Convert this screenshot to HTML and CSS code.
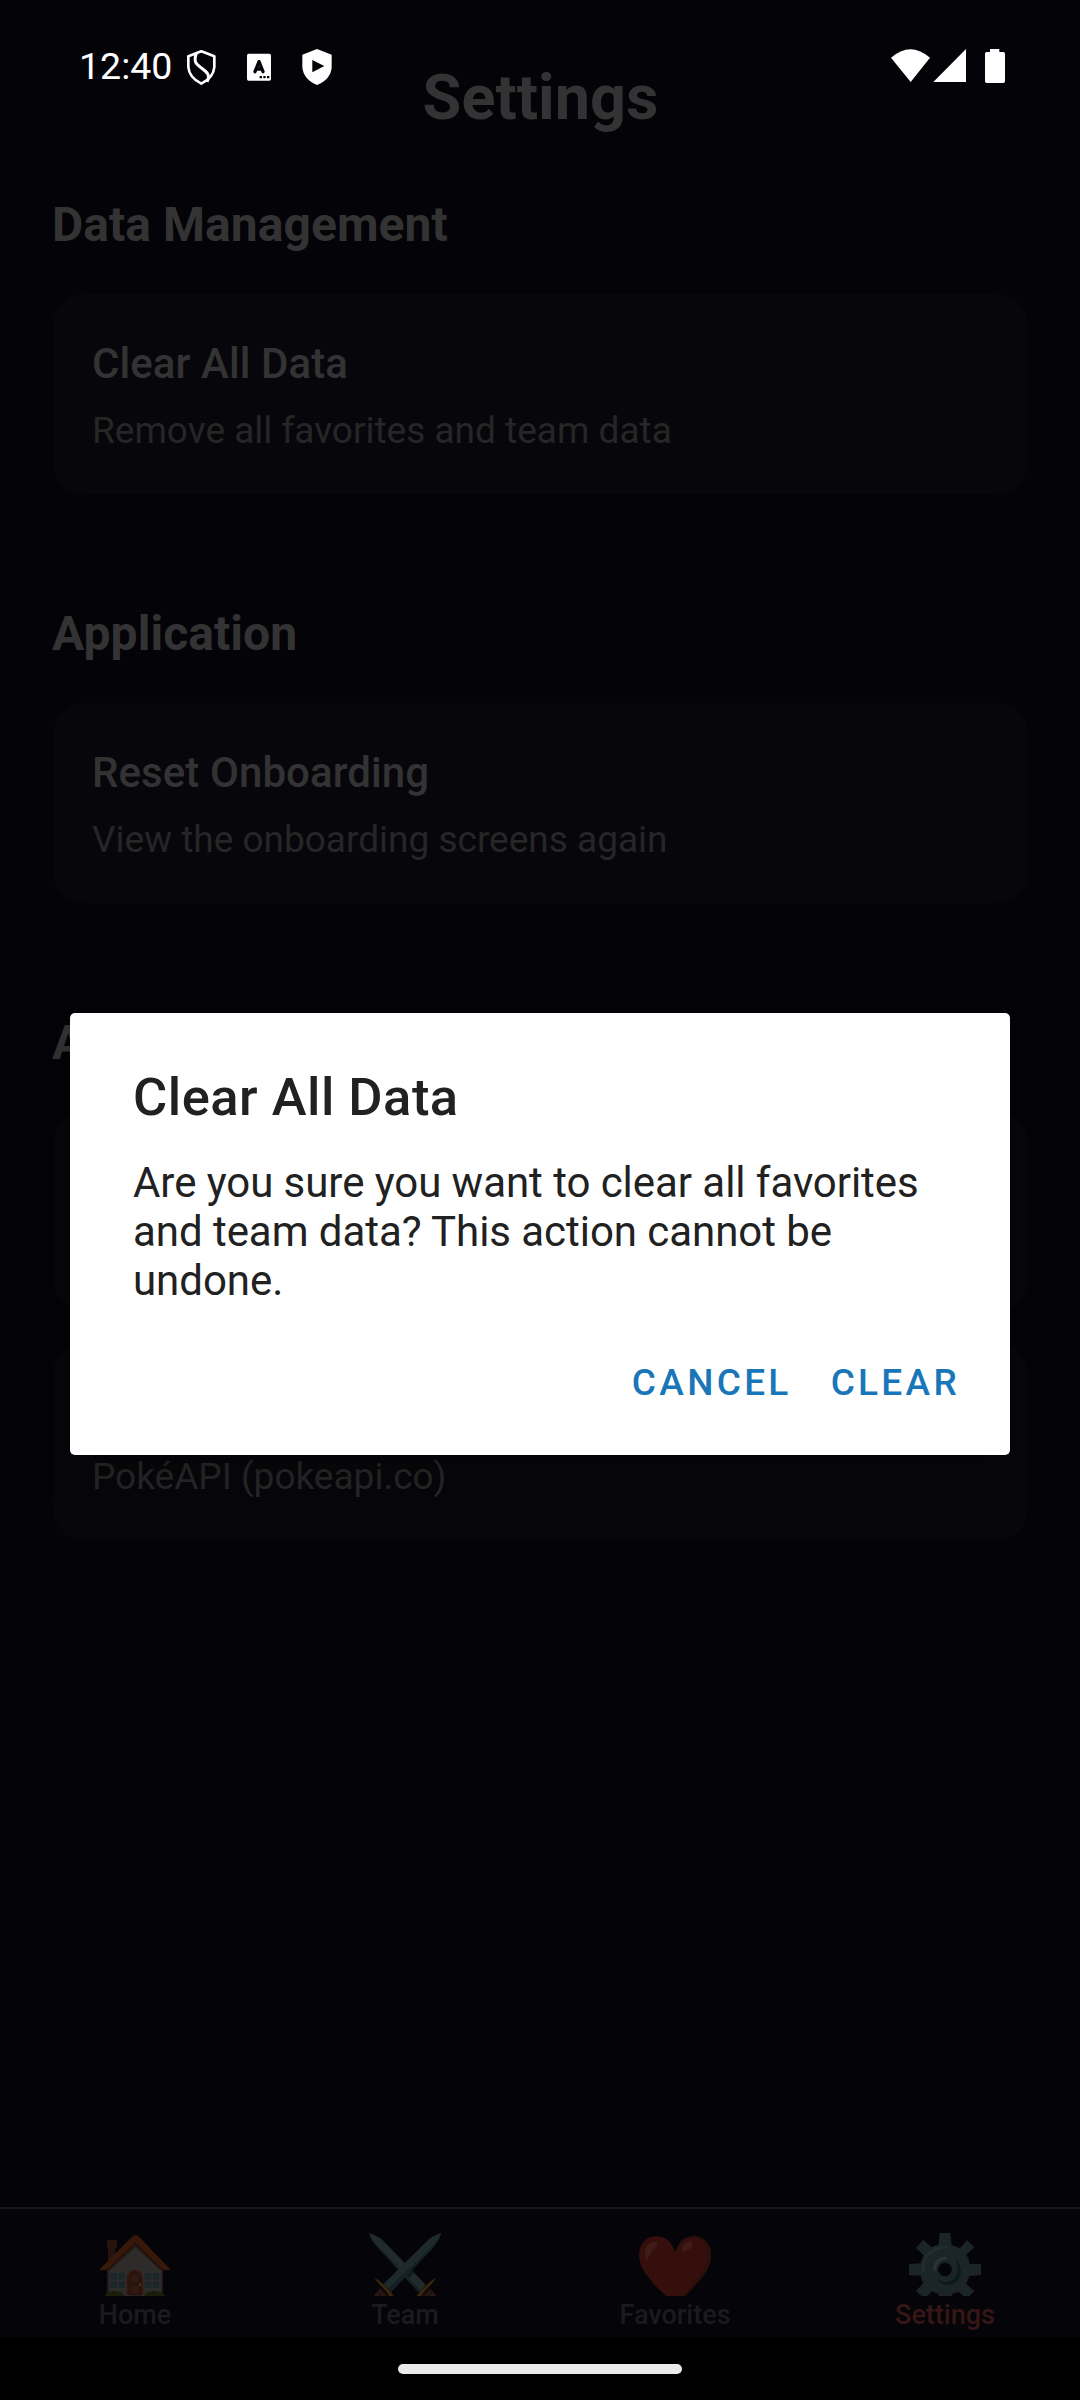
FILE: index.html
```html
<!DOCTYPE html>
<html lang="en">
<head>
<meta charset="utf-8">
<title>Settings</title>
<link rel="stylesheet" href="styles.css">
</head>
<body>
<div class="screen">
  <main class="page">
    <h1 class="page-title">Settings</h1>
    <section class="section">
      <h2 class="section-title">Data Management</h2>
      <div class="card">
        <div class="card-title">Clear All Data</div>
        <div class="card-sub">Remove all favorites and team data</div>
      </div>
    </section>
    <section class="section">
      <h2 class="section-title">Application</h2>
      <div class="card">
        <div class="card-title">Reset Onboarding</div>
        <div class="card-sub">View the onboarding screens again</div>
      </div>
    </section>
    <section class="section">
      <h2 class="section-title">About</h2>
      <div class="card card-stacked"></div>
      <div class="card card-end">
        <div class="card-sub">PokéAPI (pokeapi.co)</div>
      </div>
    </section>
  </main>

  <nav class="tabs">
    <div class="tab">
      <svg class="tab-icon" viewBox="117 129 216 189">
        <path fill="#27130d" d="M141 151h30v23h-5v30l-22 20v-50h-3z"/>
        <path fill="#2d2c2b" d="M142 230l84-75 82 75v88H142z"/>
        <path fill="#211e1d" d="M141 252v-16l85-78 83 78v16l-6-10-77-70-77 70z"/>
        <path fill="#381809" d="M117 240l98-98q11-14 23 0l95 98h-21l-86-83-88 83z"/>
        <path fill="#28120b" d="M138 240l88-85 86 85h-9l-77-73-79 73z"/>
        <path fill="#211412" d="M142 246h4v60h-4zM305 246h4v60h-4z"/>
        <g fill="#1b2629"><rect x="150" y="249" width="21" height="20" rx="3"/><rect x="175" y="249" width="20" height="20" rx="3"/><rect x="150" y="274" width="21" height="20" rx="3"/><rect x="175" y="274" width="20" height="20" rx="3"/><rect x="253" y="249" width="21" height="20" rx="3"/><rect x="278" y="249" width="20" height="20" rx="3"/><rect x="253" y="274" width="21" height="20" rx="3"/><rect x="278" y="274" width="20" height="20" rx="3"/></g>
        <path fill="#35150f" d="M200 316v-52q2-24 24-25 23 1 25 25v52z"/>
        <path fill="#27130d" d="M206 316v-50q2-20 18-21 17 1 19 21v50z"/>
        <path fill="#32190f" d="M212 278v-14q2-12 12-13 11 1 13 13v14zM212 288h25v24h-25z"/>
        <circle cx="240" cy="284" r="4" fill="#49370a"/>
        <path fill="#191e0c" d="M135 318q4-15 17-13 9-5 18 0 17-3 23 13zM253 318q6-15 20-13 9-5 20 0 15-2 22 13z"/>
      </svg>
      <span class="tab-label">Home</span>
    </div>
    <div class="tab">
      <svg class="tab-icon" viewBox="117 129 216 189">
        <path fill="#202b2e" d="M117 129q26 7 44 25l126 130-15 19-128-130q-21-21-27-44z"/>
        <path fill="#162023" d="M117 129q4 17 20 32l136 142-8 4-121-134q-21-21-27-44z"/>
        <path fill="#11191b" d="M229 253l16-15 7 8-14 18z"/>
        <path fill="#1d292b" d="M334 129q-26 7-44 25L160 283l22 21 124-127q21-24 28-48z"/>
        <path fill="#142023" d="M334 129q-9 23-26 39L174 296l10 10 122-129q21-24 28-48z"/>
        <path fill="#291713" d="M132 318q12-18 20-23l21 23zM319 318q-12-18-20-23l-22 23z"/>
        <path fill="none" stroke="#1d100e" stroke-width="4" d="M142 303l12 15M150 296l16 20M309 303l-14 15M302 296l-19 20"/>
        <path fill="#3a280b" d="M134 264q11 4 29 22 22 22 29 33h-14q-7-13-22-28-18-18-22-27zM318 264q-11 4-29 22-22 22-31 33h15q7-11 22-27 17-18 23-28z"/>
      </svg>
      <span class="tab-label">Team</span>
    </div>
    <div class="tab">
      <svg class="tab-icon" viewBox="117 129 216 189">
        <path fill="#2c0e0b" d="M226 191c6-34 28-53 56-53 30 0 52 24 52 57 0 44-35 79-79 123h-56c-46-43-82-80-82-123 0-33 21-57 53-57 29 0 49 20 56 53z"/>
        <path fill="#350f0b" d="M224 190c10-29 28-45 52-48 27 0 46 20 46 50 0 45-38 86-75 126h-48c-46-43-81-80-81-123 0-32 21-55 52-55 27 0 46 18 54 50z"/>
        <path fill="#401c19" d="M142 214c-15-23-7-57 20-59 12 1 13 13 4 20-14 9-19 22-24 39zM246 182c-2-14 13-29 26-27 9 4 7 16-3 22-10 8-21 10-23 5z"/>
      </svg>
      <span class="tab-label">Favorites</span>
    </div>
    <div class="tab tab-active">
      <svg class="tab-icon" viewBox="147 129 216 189">
        <path fill="#1b2527" fill-rule="evenodd" d="M239 129h32l4 37q14 3 25 9l21-25 22 22-24 22q8 12 10 27l34 1v33l-35 3q-3 12-10 23l25 23-15 14h-18l-13-12q-10 2-21 6v6h-40v-6q-11-3-20-8l-13 14h-18l-17-15 22-24q-6-10-8-22l-35-1v-34l35-2q2-13 9-24l-23-22 22-25 24 23q10-6 21-8zM255 218a20 20 0 1 0 0 41 20 20 0 0 0 0-41z"/>
        <path fill="none" stroke="#232d2f" stroke-width="9" d="M190 245q-3-55 45-70 14-4 26-3"/>
        <path fill="none" stroke="#2a3335" stroke-width="9" d="M224 243q-1-38 37-38"/>
        <path fill="#0e191a" d="M287 210q19 17 15 43-6 28-35 32-25 0-34-14 29 13 49-5 21-22 5-56z"/>
      </svg>
      <span class="tab-label">Settings</span>
    </div>
  </nav>
  <div class="gesture-bar"><div class="gesture-pill"></div></div>

  <header class="status-bar">
    <span class="clock">12:40</span>
    <svg class="status-left" viewBox="180 0 660 240">
      <path fill="none" stroke="#fff" stroke-width="8" stroke-linejoin="round" d="M424 64l39 15v32q-2 31-39 50-37-19-39-50V79z"/>
      <path fill="none" stroke="#fff" stroke-width="9" d="M409 70c-10 28 2 34 14 43 17 13 30 22 18 42"/>
      <rect x="561" y="71" width="72" height="81" rx="5" fill="#fff"/>
      <path fill="none" stroke="#050409" stroke-width="10" stroke-linecap="round" stroke-linejoin="round" d="M585 125l12-30 12 30M589 117h16"/>
      <path fill="#050409" d="M599 138h7v7h-7zM610 138h7v7h-7zM621 138h7v7h-7z"/>
      <path fill="#fff" d="M771 57l44 17v37q-2 37-44 54-41-17-44-54V74z"/>
      <path fill="#050409" d="M757 90l36 18-36 19z"/>
    </svg>
    <svg class="status-right" viewBox="93 0 345 240">
      <path fill="#fff" d="M93 83q58-51 117 0l-58 73z"/>
      <path fill="#fff" d="M318 57v99h-98z"/>
      <path fill="#fff" d="M390 57h28v9h12q5 0 5 5v83q0 5-5 5h-50q-5 0-5-5V71q0-5 5-5h10z"/>
    </svg>
  </header>

  <div class="dialog" role="alertdialog">
    <div class="dialog-title">Clear All Data</div>
    <p class="dialog-text">Are you sure you want to clear all favorites and team data? This action cannot be undone.</p>
    <div class="dialog-actions">
      <span class="action">CANCEL</span>
      <span class="action">CLEAR</span>
    </div>
  </div>
</div>
</body>
</html>
```
FILE: styles.css
```css
* { box-sizing: border-box; }
body { margin: 0; background: #040308; }
.screen {
  position: relative;
  display: flex;
  flex-direction: column;
  width: 1080px;
  height: 2400px;
  overflow: hidden;
  background: #040308;
  color: #333;
  font-family: Roboto, sans-serif;
}

.page { flex: 1; padding: 61px 52px 0 53px; }
.page-title { margin: 0 0 62px; font-size: 63px; font-weight: 700; line-height: 74px; text-align: center; }
.section { margin-bottom: 112px; }
.section-title { margin: 0 0 41px -1px; font-size: 48px; font-weight: 700; line-height: 56px; letter-spacing: .05px; }
.card {
  height: 200px;
  padding: 45px 39px 0;
  border-radius: 31px;
  background: #07070b;
}
.card-title { margin-bottom: 18px; font-size: 42px; font-weight: 500; line-height: 49px; letter-spacing: .08px; }
.card-sub { font-size: 37px; line-height: 49px; color: #262626; }
.card-stacked { height: 199px; margin-bottom: 31px; }
.card-end { display: flex; align-items: flex-end; height: 198px; padding-bottom: 39px; }

.tabs {
  display: grid;
  grid-template-columns: repeat(4, 1fr);
  height: 130px;
  border-top: 2px solid #19191b;
  background: #050409;
}
.tab { display: flex; flex-direction: column; align-items: center; padding-top: 24px; color: #1b1b1b; }
.tab-active { color: #371616; }
.tab-icon { display: block; width: 72px; height: 63px; }
.tab-label { margin-top: 3px; font-size: 27px; font-weight: 500; line-height: 32px; }
.gesture-bar { display: flex; justify-content: center; height: 63px; padding-top: 27px; background: #000; }
.gesture-pill { width: 284px; height: 10px; border-radius: 5px; background: #ebebeb; }

.status-bar {
  position: absolute;
  inset: 0 0 auto;
  display: flex;
  height: 110px;
  padding: 30px 74px 0 79px;
  color: #fff;
}
.clock { width: 101px; font-size: 37.5px; line-height: 72px; white-space: nowrap; }
.status-left { width: 220px; height: 80px; margin-left: -60px; }
.status-right { width: 115px; height: 80px; margin-left: auto; }

.dialog {
  position: absolute;
  left: 70px;
  top: 1013px;
  width: 940px;
  height: 442px;
  padding: 53px 45px 0 63px;
  border-radius: 5px;
  background: #fff;
  box-shadow: 0 20px 40px rgba(0, 0, 0, .2);
  color: #212121;
}
.dialog-title { font-size: 52.5px; font-weight: 500; line-height: 62px; letter-spacing: .5px; }
.dialog-text { margin: 30px 0 0; font-size: 42px; line-height: 49px; letter-spacing: -.05px; }
.dialog-actions { display: flex; justify-content: flex-end; gap: 39px; margin: 56px 5px 0 0; }
.action { font-size: 37px; font-weight: 500; line-height: 44px; letter-spacing: 3.3px; color: #1976b8; }
```
